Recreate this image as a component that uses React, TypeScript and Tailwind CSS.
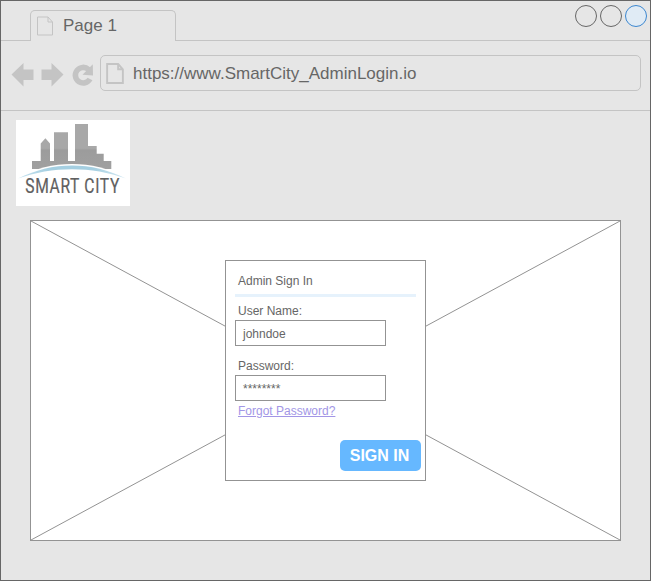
import React from "react";

function PageIcon({ className, weight }: { className: string; weight: number }) {
  return (
    <svg className={className} viewBox="0 0 17 20" fill="none" stroke="#c4c4c4" strokeWidth={weight}>
      <path d="M1 1H11.5L16 6V19H1Z" />
      <path d="M11.5 1V6H16" />
    </svg>
  );
}

function Logo() {
  return (
    <svg className="block h-[86px] w-[114px] bg-white" viewBox="0 0 114 86">
      <defs>
        <linearGradient id="tower" x1="0" y1="4" x2="0" y2="49" gradientUnits="userSpaceOnUse">
          <stop offset="0.54" stopColor="#a8a8a8" />
          <stop offset="0.58" stopColor="#9c9c9c" />
          <stop offset="1" stopColor="#a0a0a0" />
        </linearGradient>
        <linearGradient id="arc" x1="0" y1="0" x2="1" y2="0">
          <stop offset="0" stopColor="#c5e2ef" />
          <stop offset="0.3" stopColor="#a5cfe1" />
          <stop offset="0.7" stopColor="#a5cfe1" />
          <stop offset="1" stopColor="#d5eaf4" />
        </linearGradient>
      </defs>
      <path
        fill="url(#tower)"
        d="M16 49V41H24.7V23.5L29.4 18.3L34 23.5V41H38V12.3H52V41H59V4H72V26H80.7V33.7H87.7V41H95.3V49Z"
      />
      <path fill="#fff" d="M2 57C36 39.5 76 39.5 110 57L106 60H6Z" />
      <path fill="url(#arc)" d="M2 58.5C36 41 76 41 110 58.5C76 46 36 46 2 58.5Z" />
      <g transform="translate(9.3 73.3) scale(0.8 1)">
        <text
          textLength="117.5"
          fill="#606060"
          stroke="#606060"
          strokeWidth="0.2"
          className="font-['Roboto',sans-serif] text-[19.5px]"
        >
          SMART CITY
        </text>
      </g>
    </svg>
  );
}

const field = "flex h-[26px] w-[151px] items-center border border-[#939393] bg-white pl-[7px] pt-px";

function SignIn() {
  return (
    <div className="relative flex h-[221px] w-[201px] flex-col border border-[#939393] bg-white pl-[9px] text-[12px] leading-[14px] text-[#666]">
      <div className="mt-[13px] pl-[3px]">Admin Sign In</div>
      <div className="mt-[6px] h-[3px] w-[181px] bg-[#e6f2fc]" />
      <div className="mt-[7px] pl-[3px]">User Name:</div>
      <div className={`${field} mt-[2px]`}>johndoe</div>
      <div className="mt-[13px] pl-[3px]">Password:</div>
      <div className={`${field} mt-[2px]`}>********</div>
      <a className="mt-[3px] pl-[3px] text-[#a296e6] underline">Forgot Password?</a>
      <button className="mt-[22px] ml-[105px] h-[31px] w-[81px] rounded-[5px] bg-[#66b8ff] pt-px pr-[2px] text-[16px] font-bold text-white">
        SIGN IN
      </button>
    </div>
  );
}

export default function App() {
  return (
    <div className="flex h-[581px] w-[651px] flex-col border border-[#666] bg-[#e6e6e6] font-['Liberation_Sans',Arial,sans-serif]">
      <header className="flex h-[40px] items-end">
        <div className="h-px w-[29px] bg-[#c4c4c4]" />
        <div className="flex h-[31px] w-[146px] rounded-t-[5px] border border-b-0 border-[#c4c4c4] pl-[5px] pt-[5px]">
          <PageIcon className="h-[20px] w-[18px]" weight={1} />
          <span className="ml-[9px] text-[17px] leading-[19px] text-[#666]">Page 1</span>
        </div>
        <div className="flex h-[40px] flex-1 justify-end gap-[3px] border-b border-[#c4c4c4] pr-[3px] pt-[4px]">
          <div className="h-[22px] w-[22px] rounded-full border border-[#666]" />
          <div className="h-[22px] w-[22px] rounded-full border border-[#666]" />
          <div className="h-[22px] w-[22px] rounded-full border border-[#3c87d0] bg-[#e0ebf5]" />
        </div>
      </header>

      <nav className="flex h-[70px] border-b border-[#c4c4c4] pt-[14px]">
        <svg className="mt-[7px] ml-[10px] h-[25px] w-[84px] shrink-0" viewBox="0 0 84 25">
          <path fill="#c4c4c4" d="M0.5 12.5L12.5 1V7.5H22.5V18H12.5V24.5Z" />
          <path fill="#c4c4c4" d="M52.5 12.5L40.5 1V7.5H30.5V18H40.5V24.5Z" />
          <path fill="none" stroke="#c4c4c4" strokeWidth="5.6" d="M77.5 7.5A7.8 7.8 0 1 0 79 17" />
          <path fill="#c4c4c4" d="M81.8 2.2L82 13.5L71.5 12.8Z" />
        </svg>
        <div className="ml-[5px] flex h-[36px] w-[541px] items-center rounded-[5px] border border-[#c4c4c4] pl-[5px]">
          <PageIcon className="h-[21px] w-[18px]" weight={1.8} />
          <span className="ml-[9px] pt-[2px] text-[17px] leading-[20px] text-[#666]">https://www.SmartCity_AdminLogin.io</span>
        </div>
      </nav>

      <main className="flex flex-col">
        <div className="ml-[15px] mt-[9px] w-[114px]">
          <Logo />
        </div>
        <section className="relative ml-[29px] mt-[14px] flex h-[321px] w-[591px] items-start justify-center border border-[#939393] bg-white pt-[39px]">
          <svg className="absolute inset-0 h-full w-full" viewBox="0 0 589 319" stroke="#939393">
            <path d="M0 0L589 319M589 0L0 319" />
          </svg>
          <SignIn />
        </section>
      </main>
    </div>
  );
}
